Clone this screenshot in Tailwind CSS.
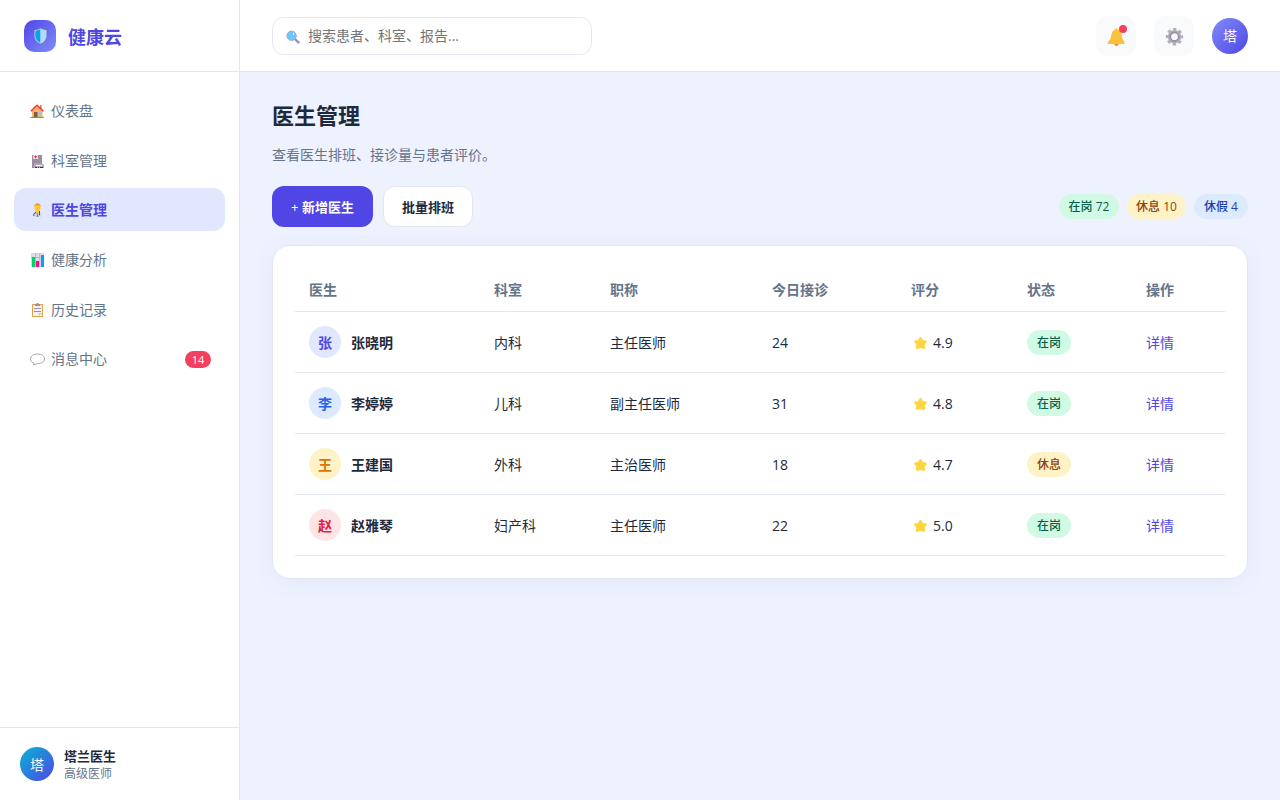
<!DOCTYPE html>
<html lang="zh-CN">

<head>
    <meta charset="UTF-8">
    <meta name="viewport" content="width=device-width, initial-scale=1.0">
    <title>健康云 - 医生管理</title>
    <script src="https://cdn.jsdelivr.net/npm/@tailwindcss/browser@4"></script>
</head>

<body class="bg-[#eef2ff] text-slate-800 text-sm font-['Open_Sans','Noto_Sans_CJK_SC',sans-serif]">
    <div class="flex h-screen overflow-hidden">
        <!-- Sidebar -->
        <aside class="w-60 shrink-0 bg-white border-r border-slate-200 flex flex-col">
            <div class="h-18 shrink-0 px-6 flex items-center gap-3 border-b border-slate-200">
                <div class="size-8 rounded-[10px] bg-[linear-gradient(135deg,#4f46e5,#818cf8)] flex items-center justify-center">
                    <svg class="w-[13px] h-4" viewBox="0 0 13 16">
                        <path d="M6.5 0.3 L8.4 1.2 L12.5 2.2 V7.5 C12.5 11.5 10 14.3 6.5 15.7 C3 14.3 .5 11.5 .5 7.5 V2.2 L4.6 1.2 Z" fill="#d3d3d3" />
                        <path d="M6.5 1.2 L1.3 3 V7.5 C1.3 11 3.5 13.7 6.5 14.9 Z" fill="#00a6ed" />
                        <path d="M6.5 1.2 L11.7 3 V7.5 C11.7 11 9.5 13.7 6.5 14.9 Z" fill="#aedcff" />
                    </svg>
                </div>
                <span class="pt-0.5 text-lg font-bold text-[#4f46e5]">健康云</span>
            </div>

            <nav class="flex-1 px-3.5 pt-[16.6px] flex flex-col gap-[6.7px] text-[#64748b]">
                <a href="#" class="h-[43px] pt-0.5 pl-4 pr-3.5 flex items-center gap-[7px] rounded-xl">
                    <svg class="size-3.5" viewBox="0 0 14 14">
                        <path d="M2 6 L7 1.5 L12.5 6 V13 H2 Z" fill="#ffb469" />
                        <rect x="10" y="1" width="1.6" height="4" fill="#d3883e" />
                        <rect x="4" y="8" width="3.5" height="5" fill="#8c5543" />
                        <rect x="8.5" y="8" width="3" height="2.6" fill="#83cbff" />
                        <path d="M.8 7.2 L7 1.2 L13.4 7.2" fill="none" stroke="#f8312f" stroke-width="1.4" />
                        <rect x=".5" y="12.8" width="13.2" height="1.2" fill="#00d26a" />
                    </svg>
                    <span>仪表盘</span>
                </a>
                <a href="#" class="h-[43px] pt-0.5 pl-4 pr-3.5 flex items-center gap-[7px] rounded-xl">
                    <svg class="size-3.5" viewBox="0 0 14 14">
                        <path d="M2 1 H12 V14 H2 Z" fill="#998ea4" />
                        <rect x="3.3" y="1" width="4.6" height="4" fill="#f4f4f4" />
                        <path d="M5.1 1.2 H6.2 V2.3 H7.3 V3.3 H6.2 V4.4 H5.1 V3.3 H4 V2.3 H5.1 Z" fill="#f8312f" />
                        <path d="M4 14 V9.5 H12 L14 11 V14 Z" fill="#b4acbc" />
                        <rect x="6" y="11" width="6" height="1" fill="#f3eef8" />
                        <path d="M5 13 H7 V14 H5 Z M8 13 H9 V14 H8 Z M10 13 H13 V14 H10 Z" fill="#990839" />
                    </svg>
                    <span>科室管理</span>
                </a>
                <a href="#" class="h-[43px] pt-0.5 pl-4 pr-3.5 flex items-center gap-[7px] rounded-xl bg-[#e0e7ff] text-[#4f46e5] font-semibold">
                    <svg class="size-3.5" viewBox="0 0 14 14">
                        <path d="M3 14 V11 Q4 8.6 7.5 8.6 Q11 8.6 12 11 V14 Z" fill="#e1d8ec" />
                        <path d="M6 8 H9 V10 L7.5 11 L6 10 Z" fill="#ffc83d" />
                        <path d="M6.8 10.3 H8.2 V14 H6.8 Z" fill="#00a6ed" />
                        <path d="M5.5 8.8 V10.2 M3.8 13 V11.2 Q3.8 10.2 5.2 10.2 M9.5 7.8 V12.3" stroke="#46528c" fill="none" />
                        <ellipse cx="7.5" cy="4.6" rx="3.1" ry="4" fill="#ffc83d" />
                        <path d="M4.4 4 Q4.2 .3 7.5 .2 Q10.8 .3 10.6 4 L9.7 2.6 H5.4 Z" fill="#f59f20" />
                        <path d="M7 5 H8" stroke="#f59f20" />
                    </svg>
                    <span>医生管理</span>
                </a>
                <a href="#" class="h-[43px] pt-0.5 pl-4 pr-3.5 flex items-center gap-[7px] rounded-xl">
                    <svg class="size-3.5" viewBox="0 0 14 14">
                        <rect x="1" width="13" height="14" fill="#e1d8ec" />
                        <path d="M1 4.5 H14 M5.5 0 V14 M9.8 0 V14" stroke="#b4acbc" stroke-width=".8" />
                        <rect x="2" y="4" width="3" height="10" fill="#00d26a" />
                        <rect x="6" y="8" width="3" height="6" fill="#f70a8d" />
                        <rect x="11" y="2" width="3" height="12" fill="#00a6ed" />
                    </svg>
                    <span>健康分析</span>
                </a>
                <a href="#" class="h-[43px] pt-0.5 pl-4 pr-3.5 flex items-center gap-[7px] rounded-xl">
                    <svg class="size-3.5" viewBox="0 0 14 14">
                        <rect x="2" y="1" width="11" height="13" rx=".5" fill="#e39d45" />
                        <path d="M3 2 H12 V13 H3 Z" fill="#f3eef8" />
                        <path d="M9 13 V10 H12 Z" fill="#cdc4d6" />
                        <path d="M5 1 H6.5 V0 H8.5 V1 H10 V3 H5 Z" fill="#998ea4" />
                        <path d="M4 5.5 H11 M4 8.5 H11" stroke="#998ea4" stroke-width="1" />
                    </svg>
                    <span>历史记录</span>
                </a>
                <a href="#" class="h-[43px] pt-px pl-4 pr-3.5 flex items-center gap-[7px] rounded-xl">
                    <svg class="size-3.5 overflow-visible" viewBox="0 0 14 14">
                        <path d="M4 11 C1.5 10.3 .5 8.8 .5 7 C.5 4 3.5 2 7.5 2 C11.5 2 14.5 4 14.5 7 C14.5 10 11.5 11.5 7.5 11.5 Q6 12.8 3.2 12.7 Q4.3 12 4 11 Z" fill="none" stroke="#9b9b9b" stroke-width=".9" />
                    </svg>
                    <span>消息中心</span>
                    <span class="ml-auto w-[26px] h-[17px] rounded-full bg-[#f43f5e] text-white text-center text-[11px] leading-[17px]">14</span>
                </a>
            </nav>

            <div class="h-[73px] shrink-0 px-5 flex items-center gap-2.5 border-t border-slate-200">
                <div class="size-[34px] pt-px rounded-full bg-[linear-gradient(135deg,#06b6d4,#4f46e5)] text-white flex items-center justify-center">塔</div>
                <div class="pt-0.5">
                    <div class="text-[13px] leading-[17px] font-semibold">塔兰医生</div>
                    <div class="text-xs leading-[18px] text-[#64748b]">高级医师</div>
                </div>
            </div>
        </aside>

        <div class="flex-1 flex flex-col">
            <!-- Top bar -->
            <header class="h-18 shrink-0 px-8 bg-white border-b border-slate-200 flex items-center justify-between">
                <div class="w-80 h-[38px] px-[13px] border border-slate-200 rounded-xl flex items-center gap-2">
                    <svg class="size-3.5 mt-0.5" viewBox="0 0 14 14">
                        <path d="M9 9 L12.5 12.5" stroke="#998ea4" stroke-width="2.4" stroke-linecap="round" />
                        <circle cx="5.6" cy="5.8" r="4.7" fill="#66c8ff" stroke="#a99fb8" stroke-width=".9" />
                        <path d="M7.5 2.5 V5" stroke="#d8f1ff" />
                    </svg>
                    <input type="text" placeholder="搜索患者、科室、报告..." class="flex-1 outline-none placeholder:text-[#757575]">
                </div>
                <div class="flex items-center gap-[18px]">
                    <button class="relative size-10 rounded-xl bg-slate-50 flex items-center justify-center">
                        <svg class="size-[18px] mt-0.5" viewBox="0 0 18 18">
                            <path d="M7 15 H12 Q11.5 18 9.5 18 Q7.5 18 7 15 Z" fill="#ff822d" />
                            <path d="M9.5 0 Q10.6 .1 10.6 1.4 Q14 2.4 14.7 7 Q15.2 11.4 17.5 14.3 V16 H.8 V14.3 Q4 11.4 4.4 7 Q5 2.4 8.3 1.4 Q8.3 .1 9.5 0 Z" fill="#f9c23c" />
                        </svg>
                        <span class="absolute top-[9px] right-[9px] size-2 rounded-full bg-[#f43f5e]"></span>
                    </button>
                    <button class="size-10 rounded-xl bg-slate-50 flex items-center justify-center">
                        <svg class="size-[18px] overflow-visible" viewBox="0 0 18 18">
                            <circle cx="9.5" cy="9.7" r="7.2" fill="none" stroke="#b4acbc" stroke-width="3" stroke-dasharray="3.1 2.55" stroke-dashoffset="1.55" />
                            <circle cx="9.5" cy="9.7" r="5.5" fill="none" stroke="#b4acbc" stroke-width="2.5" />
                            <circle cx="9.5" cy="9.7" r="4.2" fill="none" stroke="#998ea4" stroke-width="1.7" />
                        </svg>
                    </button>
                    <div class="size-9 pt-px rounded-full bg-[linear-gradient(135deg,#818cf8,#4f46e5)] text-white flex items-center justify-center">塔</div>
                </div>
            </header>

            <main class="flex-1 px-8 pt-[27px]">
                <h1 class="text-[22px] leading-8 font-bold">医生管理</h1>
                <p class="mt-[13px] leading-[22px] text-[#64748b]">查看医生排班、接诊量与患者评价。</p>

                <div class="mt-5 h-[41px] flex items-center justify-between">
                    <div class="flex items-center gap-2.5 text-[13px] font-semibold">
                        <button class="w-[101px] h-[41px] pt-px rounded-xl bg-[#4f46e5] text-white whitespace-nowrap"><span class="font-normal">+</span> 新增医生</button>
                        <button class="w-[90px] h-[41px] pt-px rounded-xl bg-white border border-slate-200 whitespace-nowrap">批量排班</button>
                    </div>
                    <div class="flex gap-2 text-xs leading-[25px] font-medium text-center whitespace-nowrap">
                        <span class="w-[60px] rounded-full bg-[#d1fae5] text-[#065f46]">在岗 72</span>
                        <span class="w-[59px] rounded-full bg-[#fef3c7] text-[#92400e]">休息 10</span>
                        <span class="w-[54px] rounded-full bg-[#dbeafe] text-[#1e40af]">休假 4</span>
                    </div>
                </div>

                <div class="mt-[18px] h-[334px] p-[22px] bg-white border border-slate-200 rounded-[18px] shadow-[0_4px_24px_rgba(14,90,130,0.06)]">
                    <table class="w-full table-fixed">
                        <colgroup>
                            <col class="w-[184px]">
                            <col class="w-[117px]">
                            <col class="w-[162px]">
                            <col class="w-[139px]">
                            <col class="w-[116px]">
                            <col class="w-[119px]">
                            <col class="w-[93px]">
                        </colgroup>
                        <thead class="text-left text-[#64748b]">
                            <tr class="h-[43px] border-b border-slate-200">
                                <th class="px-3.5 pt-px font-semibold">医生</th>
                                <th class="pl-[15px] pt-px font-semibold">科室</th>
                                <th class="px-3.5 pt-px font-semibold">职称</th>
                                <th class="px-3.5 pt-px font-semibold">今日接诊</th>
                                <th class="px-3.5 pt-px font-semibold">评分</th>
                                <th class="px-3.5 pt-px font-semibold">状态</th>
                                <th class="px-3.5 pt-px font-semibold">操作</th>
                            </tr>
                        </thead>
                        <tbody id="doctors"></tbody>
                    </table>
                </div>
            </main>
        </div>
    </div>

    <script>
        const onDuty = 'bg-[#d1fae5] text-[#065f46]';
        const resting = 'bg-[#fef3c7] text-[#92400e]';

        const doctors = [
            { name: '张晓明', dept: '内科', title: '主任医师', visits: 24, score: '4.9', status: '在岗', badge: onDuty, avatar: 'bg-[#e0e7ff] text-[#4f46e5]' },
            { name: '李婷婷', dept: '儿科', title: '副主任医师', visits: 31, score: '4.8', status: '在岗', badge: onDuty, avatar: 'bg-[#dbeafe] text-[#2563eb]' },
            { name: '王建国', dept: '外科', title: '主治医师', visits: 18, score: '4.7', status: '休息', badge: resting, avatar: 'bg-[#fef3c7] text-[#d97706]' },
            { name: '赵雅琴', dept: '妇产科', title: '主任医师', visits: 22, score: '5.0', status: '在岗', badge: onDuty, avatar: 'bg-[#ffe4e6] text-[#e11d48]' }
        ];

        document.getElementById('doctors').innerHTML = doctors.map(d => `
            <tr class="h-[61px] border-b border-slate-200">
                <td class="px-3.5">
                    <div class="flex items-center gap-2.5 font-semibold">
                        <div class="size-8 pt-0.5 rounded-full flex items-center justify-center ${d.avatar}">${d.name[0]}</div>
                        <span class="pt-0.5">${d.name}</span>
                    </div>
                </td>
                <td class="pl-[15px] pt-0.5">${d.dept}</td>
                <td class="px-3.5 pt-0.5">${d.title}</td>
                <td class="px-3.5 pt-0.5">${d.visits}</td>
                <td class="px-3.5 pt-0.5">
                    <div class="flex items-center gap-1.5 pl-[3px]">
                        <svg class="w-[13px] h-3" viewBox="0 0 13 12">
                            <path d="M5.4 .6 Q6.5 -.6 7.6 .6 L8.8 3 L12 3.6 Q13.4 4.2 12.5 5.4 L10.6 7.6 L11.2 10.8 Q11 12.4 9.5 11.8 L6.5 11 L3.5 11.8 Q2 12.4 1.8 10.8 L2.4 7.6 L.5 5.4 Q-.4 4.2 1 3.6 L4.2 3 Z" fill="#fcd53f" />
                        </svg>
                        <span>${d.score}</span>
                    </div>
                </td>
                <td class="px-3.5 pt-0.5"><span class="inline-block align-middle px-2.5 rounded-full text-xs leading-[25px] font-medium ${d.badge}">${d.status}</span></td>
                <td class="px-3.5 pt-0.5"><a href="#" class="text-[#4f46e5]">详情</a></td>
            </tr>`).join('');
    </script>
</body>

</html></script>
